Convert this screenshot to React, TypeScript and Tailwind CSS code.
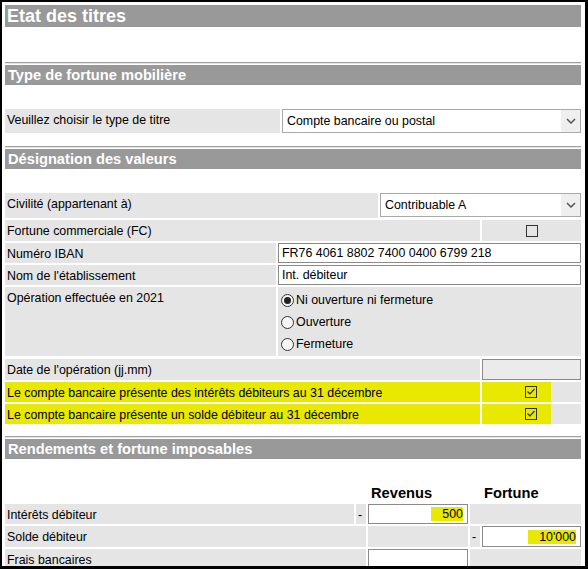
import React from "react";

const font = "font-['Liberation_Sans',Arial,sans-serif]";

function Title({ children }: { children: React.ReactNode }) {
  return (
    <div className="h-[22px] bg-[#999999] pl-[2px] text-[18px] font-bold leading-[22px] text-white">
      {children}
    </div>
  );
}

function SectionHeader({ children }: { children: React.ReactNode }) {
  return (
    <div>
      <div className="h-px bg-[#a0a0a0]" />
      <div className="h-px bg-[#e4e4e4]" />
      <div className="mt-px h-[20px] bg-[#999999] pl-[3px] text-[14.67px] font-bold leading-[20px] text-white">
        {children}
      </div>
    </div>
  );
}

function Chevron() {
  return (
    <div className="flex h-[22px] w-[19px] items-center justify-center bg-[#efefef]">
      <svg width="10" height="6" viewBox="0 0 10 6">
        <path d="M1 1 L5 5 L9 1" fill="none" stroke="#555" strokeWidth="1.5" />
      </svg>
    </div>
  );
}

function Select({ value, className }: { value: string; className: string }) {
  return (
    <div className={`flex h-[24px] items-start justify-between border border-[#a9a9a9] bg-white pl-[4px] ${className}`}>
      <span className="pt-[2px]">{value}</span>
      <Chevron />
    </div>
  );
}

function Input({ value, className, right }: { value?: string; className: string; right?: boolean }) {
  return (
    <div
      className={`flex h-[20px] items-center border border-[#8a8a8a] bg-white ${right ? "justify-end pr-[4px]" : "pl-[3px]"} ${className}`}
    >
      {right && value ? <span className="bg-[#e8e800] pl-[11px] leading-[14px]">{value}</span> : value}
    </div>
  );
}

function Label({ children, className }: { children?: React.ReactNode; className: string }) {
  return <div className={`bg-[#e5e5e5] pl-[2px] pt-[2px] ${className}`}>{children}</div>;
}

function Radio({ checked, label }: { checked?: boolean; label: string }) {
  return (
    <div className="flex h-[22px] items-center">
      <div className="ml-[3px] mr-[2px] flex h-[13px] w-[13px] items-center justify-center rounded-full border border-[#333] bg-[#f6f6f6]">
        {checked && <div className="h-[7px] w-[7px] rounded-full bg-[#222]" />}
      </div>
      <span>{label}</span>
    </div>
  );
}

function Checkbox({ checked }: { checked?: boolean }) {
  return (
    <div className="flex h-[12px] w-[12px] items-center justify-center border border-[#333]">
      {checked && (
        <svg width="10" height="10" viewBox="0 0 10 10">
          <path d="M1.5 4.5 L4 7 L8.5 2" fill="none" stroke="#333" strokeWidth="1.2" />
        </svg>
      )}
    </div>
  );
}

export default function App() {
  return (
    <div
      className={`h-[569px] w-[588px] overflow-hidden border-b-[3px] border-l-2 border-r-[3px] border-t-2 border-black bg-white ${font} text-[12.4px] text-black`}
    >
      <div className="pl-[3px] pr-[4px] pt-[3px]">
        <Title>Etat des titres</Title>

        {/* Type de fortune */}
        <div className="mt-[35px]">
          <SectionHeader>Type de fortune mobilière</SectionHeader>
        </div>
        <div className="mt-[24px] flex gap-[2px]">
          <Label className="h-[24px] w-[275px]">Veuillez choisir le type de titre</Label>
          <Select value="Compte bancaire ou postal" className="flex-1" />
        </div>

        {/* Désignation */}
        <div className="mt-[13px]">
          <SectionHeader>Désignation des valeurs</SectionHeader>
        </div>
        <div className="mt-[24px] flex flex-col gap-[2px]">
          <div className="flex gap-[2px]">
            <Label className="h-[25px] w-[373px]">Civilité (appartenant à)</Label>
            <Select value="Contribuable A" className="flex-1" />
          </div>
          <div className="flex h-[21px] gap-[2px]">
            <Label className="w-[475px]">Fortune commerciale (FC)</Label>
            <div className="flex flex-1 items-center justify-center bg-[#e5e5e5]">
              <Checkbox />
            </div>
          </div>
          <div className="flex h-[20px] gap-[2px]">
            <Label className="w-[271px]">Numéro IBAN</Label>
            <Input value="FR76 4061 8802 7400 0400 6799 218" className="flex-1" />
          </div>
          <div className="flex h-[20px] gap-[2px]">
            <Label className="w-[271px]">Nom de l'établissement</Label>
            <Input value="Int. débiteur" className="flex-1" />
          </div>
          <div className="flex gap-[2px]">
            <Label className="w-[271px]">Opération effectuée en 2021</Label>
            <div className="flex-1 bg-[#e5e5e5] pb-px pt-[2px]">
              <Radio checked label="Ni ouverture ni fermeture" />
              <Radio label="Ouverture" />
              <Radio label="Fermeture" />
            </div>
          </div>
          <div className="mt-px flex h-[21px] gap-[2px]">
            <Label className="w-[475px]">Date de l'opération (jj.mm)</Label>
            <div className="flex-1 border border-[#8a8a8a] bg-[#ebebeb]" />
          </div>
          <div className="flex h-[20px] gap-[2px]">
            <div className="w-[475px] bg-[#e8e800] pl-[2px] pt-[2px]">
              Le compte bancaire présente des intérêts débiteurs au 31 décembre
            </div>
            <div className="flex w-[69px] items-center justify-center bg-[#e8e800] pl-[30px] pr-[1px]">
              <Checkbox checked />
            </div>
            <div className="-ml-[2px] flex-1 bg-[#e5e5e5]" />
          </div>
          <div className="flex h-[20px] gap-[2px]">
            <div className="w-[475px] bg-[#e8e800] pl-[2px] pt-[2px]">
              Le compte bancaire présente un solde débiteur au 31 décembre
            </div>
            <div className="flex w-[69px] items-center justify-center bg-[#e8e800] pl-[30px] pr-[1px]">
              <Checkbox checked />
            </div>
            <div className="-ml-[2px] flex-1 bg-[#e5e5e5]" />
          </div>
        </div>

        {/* Rendements */}
        <div className="mt-[12px]">
          <SectionHeader>Rendements et fortune imposables</SectionHeader>
        </div>
        <div className="mt-[23px] flex flex-col gap-[2px]">
          <div className="flex h-[20px] items-end gap-[2px] pb-px text-[14.67px] font-bold leading-none">
            <div className="w-[349px]" />
            <div className="w-[10px]" />
            <div className="w-[100px] pl-[3px]">Revenus</div>
            <div className="w-[10px]" />
            <div className="flex-1 pl-[2px]">Fortune</div>
          </div>
          <div className="flex h-[20px] gap-[2px]">
            <Label className="w-[349px]">Intérêts débiteur</Label>
            <Label className="w-[10px]">-</Label>
            <Input value="500" right className="w-[100px]" />
            <div className="flex-1 bg-[#e5e5e5]" />
          </div>
          <div className="flex h-[21px] gap-[2px]">
            <Label className="w-[361px]">Solde débiteur</Label>
            <div className="w-[100px] bg-[#e5e5e5]" />
            <Label className="w-[10px]">-</Label>
            <Input value="10'000" right className="h-[21px] flex-1" />
          </div>
          <div className="flex h-[20px] gap-[2px]">
            <Label className="w-[361px]">Frais bancaires</Label>
            <Input className="w-[100px]" />
            <div className="flex-1 bg-[#e5e5e5]" />
          </div>
        </div>
      </div>
    </div>
  );
}
